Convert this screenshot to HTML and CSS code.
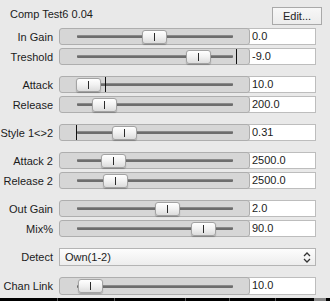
FILE: index.html
```html
<!DOCTYPE html>
<html lang="en">
<head>
    <meta charset="UTF-8">
    <title>Comp Test6</title>
    <link rel="stylesheet" href="styles.css">
</head>
<body>
<div class="panel">
    <!--标题栏-->
    <div class="head">
        <span class="title">Comp Test6 0.04</span>
        <button class="edit">Edit...</button>
    </div>

    <div class="group">
        <div class="row">
            <label>In Gain</label>
            <div class="slider"><div class="track"></div><div class="thumb" style="left:82px"></div></div>
            <div class="value">0.0</div>
        </div>
        <div class="row">
            <label>Treshold</label>
            <div class="slider"><div class="track"></div><i class="tick" style="left:176px"></i><div class="thumb" style="left:126px"></div></div>
            <div class="value">-9.0</div>
        </div>
    </div>

    <div class="group">
        <div class="row">
            <label>Attack</label>
            <div class="slider"><div class="track"></div><i class="tick" style="left:45px"></i><div class="thumb" style="left:16px"></div></div>
            <div class="value">10.0</div>
        </div>
        <div class="row">
            <label>Release</label>
            <div class="slider"><div class="track"></div><div class="thumb" style="left:32px"></div></div>
            <div class="value">200.0</div>
        </div>
    </div>

    <div class="group">
        <div class="row">
            <label>Style 1&lt;&gt;2</label>
            <div class="slider"><div class="track"></div><i class="tick" style="left:16px"></i><div class="thumb" style="left:52px"></div></div>
            <div class="value">0.31</div>
        </div>
    </div>

    <div class="group">
        <div class="row">
            <label>Attack 2</label>
            <div class="slider"><div class="track"></div><div class="thumb" style="left:41px"></div></div>
            <div class="value">2500.0</div>
        </div>
        <div class="row">
            <label>Release 2</label>
            <div class="slider"><div class="track"></div><div class="thumb" style="left:43px"></div></div>
            <div class="value">2500.0</div>
        </div>
    </div>

    <div class="group">
        <div class="row">
            <label>Out Gain</label>
            <div class="slider"><div class="track"></div><div class="thumb" style="left:95px"></div></div>
            <div class="value">2.0</div>
        </div>
        <div class="row">
            <label>Mix%</label>
            <div class="slider"><div class="track"></div><div class="thumb" style="left:131px"></div></div>
            <div class="value">90.0</div>
        </div>
    </div>

    <div class="group">
        <div class="row wide">
            <label>Detect</label>
            <div class="select">
                <span>Own(1-2)</span>
                <svg width="8" height="13" viewBox="0 0 8 13"><path d="M1 5 L4 2 L7 5 M1 8 L4 11 L7 8" fill="none" stroke="#333" stroke-width="1.3"/></svg>
            </div>
        </div>
    </div>

    <div class="group">
        <div class="row tall">
            <label>Chan Link</label>
            <div class="slider"><div class="track"></div><div class="thumb" style="left:18px"></div></div>
            <div class="value">10.0</div>
        </div>
    </div>
</div>
<!--底部黑色工具条-->
<div class="bar">
    <span></span><span></span><span></span><span></span><span></span><span></span>
</div>
</body>
</html>
```

FILE: styles.css
```css
* {
    margin: 0;
    padding: 0;
    box-sizing: border-box;
}

html, body {
    width: 330px;
    height: 301px;
    overflow: hidden;
}

body {
    background-color: #e9e9e9;
    font-family: "Liberation Sans", Arial, sans-serif;
    font-size: 11px;
    color: #1b1b1b;
}

.panel {
    height: 298px;
    padding-right: 8px;
}

/*标题栏*/
.head {
    height: 28px;
    display: flex;
    justify-content: space-between;
    align-items: flex-start;
    padding-left: 10px;
}

.title {
    margin-top: 8px;
}

.edit {
    margin-top: 7px;
    width: 50px;
    height: 18px;
    font: inherit;
    color: #222;
    background: linear-gradient(#f7f7f7, #ececec);
    border: 1px solid #a9a9a9;
}

.group {
    display: flex;
    flex-direction: column;
    gap: 3px;
    margin-bottom: 11px;
}

.row {
    height: 17px;
    display: grid;
    grid-template-columns: 53px 191px 69px;
    column-gap: 0;
    align-items: center;
}

.row.tall {
    height: 18px;
}

.row.wide {
    height: 18px;
    grid-template-columns: 53px 263px;
}

.row label {
    text-align: right;
    padding-right: 0;
    margin-right: -6px;
    width: 53px;
}

.row .slider,
.row .select {
    margin-left: 6px;
}

/*滑块*/
.slider {
    position: relative;
    width: 191px;
    height: 100%;
    border: 1px solid #aeaeae;
    border-radius: 3px;
    background-color: #d6d6d6;
    display: flex;
    align-items: center;
}

.track {
    height: 3px;
    margin-left: 17px;
    width: 156px;
    background-color: #6d6d6d;
    border-top: 1px solid #8a8a8a;
    border-radius: 1px;
}

.tick {
    position: absolute;
    top: 0;
    bottom: 0;
    width: 1px;
    background-color: #111;
}

.thumb {
    position: absolute;
    top: 1px;
    width: 25px;
    height: 14px;
    border: 1px solid #a3a3a3;
    border-radius: 3px;
    background: linear-gradient(#ffffff, #f1f1f1 50%, #dcdcdc);
    box-shadow: 0 1px 1px rgba(0, 0, 0, 0.25);
}

.thumb::after {
    content: "";
    position: absolute;
    left: 11px;
    top: 2px;
    width: 1px;
    height: 8px;
    background-color: #2a2a2a;
}

/*数值框*/
.value {
    width: 69px;
    height: 100%;
    margin-left: 3px;
    background-color: #fff;
    border: 1px solid #bdbdbd;
    padding-left: 4px;
    line-height: 15px;
}

.select {
    height: 100%;
    border: 1px solid #b4b4b4;
    background: linear-gradient(#fdfdfd, #ededed);
    display: flex;
    justify-content: space-between;
    align-items: center;
    padding: 0 4px 0 5px;
}

/*底部黑条*/
.bar {
    height: 3px;
    background-color: #000;
    display: flex;
}

.bar span {
    border-left: 1px solid #555;
}

.bar span:nth-child(1) { margin-left: 57px; }
.bar span:nth-child(2) { margin-left: 56px; }
.bar span:nth-child(3) { margin-left: 70px; }
.bar span:nth-child(4) { margin-left: 43px; }
.bar span:nth-child(5) { margin-left: 45px; }
.bar span:nth-child(6) { margin-left: 38px; width: 12px; border-left: none; background-color: #888; }
```
